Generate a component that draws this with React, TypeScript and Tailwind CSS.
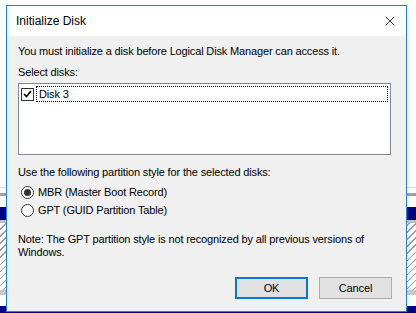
import { X } from "lucide-react";

const font = { fontFamily: '"Segoe UI", "Liberation Sans", Arial, sans-serif' };

const Backdrop = () => (
  <div className="absolute inset-0">
    <div className="absolute left-0 right-0 top-[187px] h-px bg-[#d9d9d9]" />
    <div className="absolute left-0 right-0 top-[193px] h-[3px] bg-[#a0a0a0]" />
    <div className="absolute left-0 right-0 top-[207px] h-[13px] bg-[#000080]" />
    <div className="absolute left-0 right-0 top-[220px] h-[3px] bg-[#c0c0c0]" />
    <div className="absolute left-0 right-0 top-[223px] h-[67px] bg-[repeating-linear-gradient(135deg,#ffffff_0px,#ffffff_4px,#9a9a9a_4px,#9a9a9a_5px)]" />
    <div className="absolute left-0 right-0 top-[290px] h-[5px] bg-[#c8c8c8]" />
    <div className="absolute left-0 right-0 top-[306px] h-[7px] bg-[#000080]" />
  </div>
);

const Checkbox = () => (
  <span className="flex h-[13px] w-[13px] items-center justify-center border border-[#333333] bg-white">
    <svg width="9" height="8" viewBox="0 0 9 8">
      <path d="M1 4 L3.5 6.5 L8 1" fill="none" stroke="#000" strokeWidth="1.6" />
    </svg>
  </span>
);

const Radio = ({ checked, label }: { checked: boolean; label: string }) => (
  <div className="flex h-[18px] items-center gap-[4px]">
    <span className="flex h-[13px] w-[13px] items-center justify-center rounded-full border border-[#333333] bg-white">
      {checked && <span className="h-[7px] w-[7px] rounded-full bg-[#333333]" />}
    </span>
    <span>{label}</span>
  </div>
);

export default function App() {
  return (
    <div className="relative h-[313px] w-[416px] overflow-hidden bg-white text-[11px] tracking-[-0.15px] text-black" style={font}>
      <Backdrop />
      <div className="relative ml-[6px] mt-[5px] flex h-[307px] w-[401px] flex-col border border-[#1883d7] bg-[#f0f0f0]">
        <div className="flex h-[30px] items-center justify-between bg-white pl-[9px] pr-[8px] text-[12px] tracking-normal">
          <span>Initialize Disk</span>
          <X size={16} strokeWidth={1.2} />
        </div>
        <div className="flex flex-1 flex-col px-[11px]">
          <div className="mt-[8px] leading-[15px]">You must initialize a disk before Logical Disk Manager can access it.</div>
          <div className="mt-[6px] leading-[15px]">Select disks:</div>
          <div className="mt-[3px] h-[72px] w-[373px] border border-[#828790] bg-white p-[2px]">
            <div className="flex h-[16px] items-center gap-[2px]">
              <Checkbox />
              <span className="flex h-[16px] flex-1 items-center border border-dotted border-black pl-[2px]">Disk 3</span>
            </div>
          </div>
          <div className="mt-[10px] leading-[15px]">Use the following partition style for the selected disks:</div>
          <div className="mt-[3px] pl-[3px]">
            <Radio checked label="MBR (Master Boot Record)" />
            <Radio checked={false} label="GPT (GUID Partition Table)" />
          </div>
          <div className="mt-[14px] leading-[13px]">
            Note: The GPT partition style is not recognized by all previous versions of
            <br />
            Windows.
          </div>
          <div className="mt-auto mb-[12px] flex justify-end gap-[11px] pr-[3px]">
            <button className="h-[22px] w-[73px] border-2 border-[#0078d7] bg-[#e1e1e1]">OK</button>
            <button className="h-[22px] w-[73px] border border-[#adadad] bg-[#e1e1e1]">Cancel</button>
          </div>
        </div>
      </div>
    </div>
  );
}
